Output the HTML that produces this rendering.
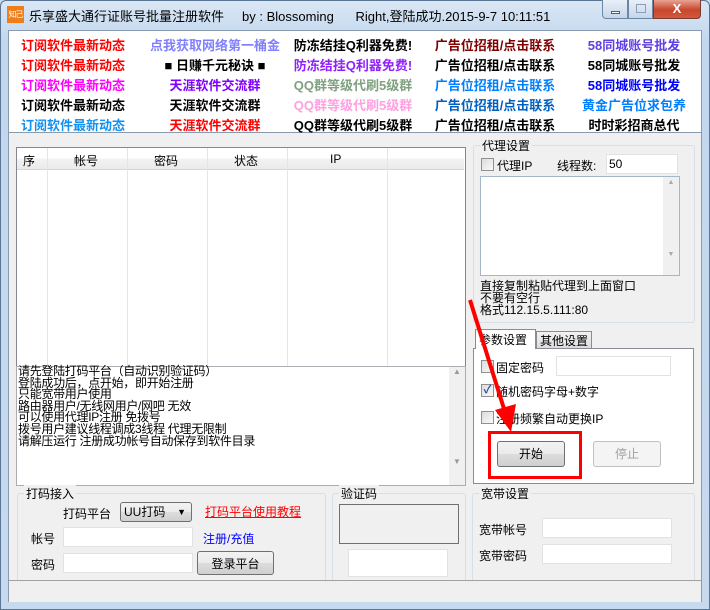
<!DOCTYPE html>
<html><head><meta charset="utf-8"><style>
*{box-sizing:border-box;margin:0;padding:0}
body{width:710px;height:610px;overflow:hidden;background:#c9dcf0;font-family:"Liberation Sans","Noto Sans CJK SC","WenQuanYi Zen Hei",sans-serif;font-size:12px;position:relative}
.a{position:absolute}
.frame{left:0;top:0;width:710px;height:610px;background:linear-gradient(#dae7f5,#c2d7ee 40px,#c6d9ef);border:1px solid #5a7694;border-radius:6px 6px 0 0}
.top{left:8px;top:30px;width:694px;height:103px;background:#fff;border:1px solid #8a9bb0}
.link{position:absolute;font-weight:bold;font-size:13px;white-space:nowrap;transform:translateX(-50%)}
.client{left:8px;top:133px;width:694px;height:469px;background:#f0f0f0;border-left:1px solid #8a9bb0;border-right:1px solid #8a9bb0;border-bottom:1px solid #8a9bb0}
.box{background:#fff;border:1px solid #abadb3}
.grp{border:1px solid #d5dfe5;border-radius:3px}
.lg{position:absolute;background:#f0f0f0;padding:0 2px;font-size:12px;top:-9px;left:6px}
.btn{border:1px solid #707070;border-radius:3px;background:linear-gradient(#f2f2f2,#ebebeb 50%,#dddddd 50%,#cfcfcf);text-align:center;line-height:24px}
.cb{width:13px;height:13px;border:1px solid #8f8f8f;background:linear-gradient(135deg,#dcdcdc,#fafafa)}
.t{position:absolute;white-space:nowrap}
</style></head><body>
<div class="a frame"></div>
<div class="a" style="left:7px;top:6px;width:17px;height:17px;background:#f07d1a;color:#fff;font-size:8px;line-height:17px;text-align:center;letter-spacing:-1px;overflow:hidden">知己</div>
<div class="t" style="left:29px;top:6px;font-size:13px;color:#000">乐享盛大通行证账号批量注册软件&nbsp;&nbsp;&nbsp;&nbsp;&nbsp;by : Blossoming&nbsp;&nbsp;&nbsp;&nbsp;&nbsp;&nbsp;Right,登陆成功.2015-9-7 10:11:51</div>
<div class="a" style="left:602px;top:0;width:26px;height:19px;border:1px solid #6d86a3;border-top:0;border-radius:0 0 0 4px;background:linear-gradient(#e9f0f8,#c5d6ea)"><div class="a" style="left:8px;top:11px;width:9px;height:3px;background:#fff;border:1px solid #4a5f78"></div></div>
<div class="a" style="left:628px;top:0;width:25px;height:19px;border:1px solid #6d86a3;border-top:0;background:linear-gradient(#e9f0f8,#c5d6ea)"><div class="a" style="left:7px;top:4px;width:10px;height:9px;border:1px solid #8aa0b8"></div></div>
<div class="a" style="left:653px;top:0;width:48px;height:19px;border:1px solid #7a3a30;border-top:0;border-radius:0 0 4px 0;background:linear-gradient(#e8a393,#c9462c 55%,#d05a3a);color:#fff;font-weight:bold;font-size:13px;text-align:center;line-height:18px">X</div>
<div class="a top">
<div class="link" style="left:64px;top:4px;color:#f00">订阅软件最新动态</div>
<div class="link" style="left:206px;top:4px;color:#8080ff">点我获取网络第一桶金</div>
<div class="link" style="left:344px;top:4px;color:#000">防冻结挂Q利器免费!</div>
<div class="link" style="left:486px;top:4px;color:#800000">广告位招租/点击联系</div>
<div class="link" style="left:625px;top:4px;color:#6040e0">58同城账号批发</div>
<div class="link" style="left:64px;top:24px;color:#f00">订阅软件最新动态</div>
<div class="link" style="left:206px;top:24px;color:#000">■ 日赚千元秘诀 ■</div>
<div class="link" style="left:344px;top:24px;color:#9020ff">防冻结挂Q利器免费!</div>
<div class="link" style="left:486px;top:24px;color:#000">广告位招租/点击联系</div>
<div class="link" style="left:625px;top:24px;color:#000">58同城账号批发</div>
<div class="link" style="left:64px;top:44px;color:#f0f">订阅软件最新动态</div>
<div class="link" style="left:206px;top:44px;color:#8000ff">天涯软件交流群</div>
<div class="link" style="left:344px;top:44px;color:#80a080">QQ群等级代刷5级群</div>
<div class="link" style="left:486px;top:44px;color:#0080ff">广告位招租/点击联系</div>
<div class="link" style="left:625px;top:44px;color:#0000ff">58同城账号批发</div>
<div class="link" style="left:64px;top:64px;color:#000">订阅软件最新动态</div>
<div class="link" style="left:206px;top:64px;color:#000">天涯软件交流群</div>
<div class="link" style="left:344px;top:64px;color:#ffa0e0">QQ群等级代刷5级群</div>
<div class="link" style="left:486px;top:64px;color:#0060c0">广告位招租/点击联系</div>
<div class="link" style="left:625px;top:64px;color:#0080ff">黄金广告位求包养</div>
<div class="link" style="left:64px;top:84px;color:#1090f0">订阅软件最新动态</div>
<div class="link" style="left:206px;top:84px;color:#f00">天涯软件交流群</div>
<div class="link" style="left:344px;top:84px;color:#000">QQ群等级代刷5级群</div>
<div class="link" style="left:486px;top:84px;color:#000">广告位招租/点击联系</div>
<div class="link" style="left:625px;top:84px;color:#000">时时彩招商总代</div>
</div>
<div class="a client"></div>
<div class="a box" style="left:16px;top:147px;width:450px;height:220px;border-color:#828790"></div>
<div class="a" style="left:17px;top:148px;width:447px;height:22px;background:linear-gradient(#fff,#fff 50%,#f3f3f3 50%,#eaeaea);border-bottom:1px solid #d5d5d5"></div>
<div class="t" style="left:23px;top:152px">序</div>
<div class="t" style="left:74px;top:152px">帐号</div>
<div class="t" style="left:154px;top:152px">密码</div>
<div class="t" style="left:234px;top:152px">状态</div>
<div class="t" style="left:330px;top:152px">IP</div>
<div class="a" style="left:47px;top:148px;height:218px;border-left:1px solid #e5e5e5"></div>
<div class="a" style="left:127px;top:148px;height:218px;border-left:1px solid #e5e5e5"></div>
<div class="a" style="left:207px;top:148px;height:218px;border-left:1px solid #e5e5e5"></div>
<div class="a" style="left:287px;top:148px;height:218px;border-left:1px solid #e5e5e5"></div>
<div class="a" style="left:387px;top:148px;height:218px;border-left:1px solid #e5e5e5"></div>
<div class="a box" style="left:16px;top:366px;width:450px;height:120px"></div>
<div class="a" style="left:449px;top:367px;width:16px;height:118px;background:#f0f0f0;color:#999;font-size:8px;text-align:center">▲<br><br><br><br><br><br><br><br><br><br>▼</div>
<div class="t" style="left:18px;top:366px;line-height:11.6px;font-size:12px;letter-spacing:-0.3px">请先登陆打码平台（自动识别验证码）<br>登陆成功后，点开始，即开始注册<br>只能宽带用户使用<br>路由器用户/无线网用户/网吧 无效<br>可以使用代理IP注册 免拨号<br>拨号用户建议线程调成3线程 代理无限制<br>请解压运行 注册成功帐号自动保存到软件目录</div>
<div class="a grp" style="left:17px;top:493px;width:309px;height:100px"><span class="lg">打码接入</span></div>
<div class="t" style="left:63px;top:505px">打码平台</div>
<div class="a btn" style="left:120px;top:502px;width:72px;height:20px;line-height:18px;text-align:left;padding-left:3px">UU打码 <span style="position:absolute;right:5px;font-size:9px">▼</span></div>
<div class="t" style="left:205px;top:503px;color:#f00;text-decoration:underline">打码平台使用教程</div>
<div class="t" style="left:31px;top:530px">帐号</div>
<div class="a box" style="left:63px;top:527px;width:130px;height:20px;border-color:#e0e3e6"></div>
<div class="t" style="left:203px;top:530px;color:#00f">注册/充值</div>
<div class="t" style="left:31px;top:556px">密码</div>
<div class="a box" style="left:63px;top:553px;width:130px;height:20px;border-color:#e0e3e6"></div>
<div class="a btn" style="left:197px;top:551px;width:77px;height:24px">登录平台</div>
<div class="a grp" style="left:332px;top:493px;width:134px;height:100px"><span class="lg">验证码</span></div>
<div class="a" style="left:339px;top:504px;width:120px;height:40px;border:1px solid #707070"></div>
<div class="a box" style="left:348px;top:549px;width:100px;height:28px;border-color:#e0e3e6"></div>
<div class="a grp" style="left:473px;top:145px;width:222px;height:178px"><span class="lg">代理设置</span></div>
<div class="a cb" style="left:481px;top:158px"></div>
<div class="t" style="left:497px;top:157px">代理IP</div>
<div class="t" style="left:557px;top:157px">线程数:</div>
<div class="a box" style="left:606px;top:154px;width:72px;height:20px;border-color:#e0e3e6;padding:2px">50</div>
<div class="a box" style="left:480px;top:176px;width:200px;height:100px;border-color:#a5b6c8"></div>
<div class="a" style="left:663px;top:177px;width:16px;height:98px;background:#f0f0f0;color:#aaa;font-size:7px;text-align:center;line-height:12px">▲<br><br><br><br><br><br>▼</div>
<div class="t" style="left:480px;top:280px;line-height:12px">直接复制粘贴代理到上面窗口<br>不要有空行<br>格式112.15.5.111:80</div>
<div class="a" style="left:473px;top:348px;width:221px;height:136px;background:#fff;border:1px solid #898c95"></div>
<div class="a" style="left:475px;top:329px;width:61px;height:20px;background:#fff;border:1px solid #898c95;border-bottom:0;padding:1px 3px">参数设置</div>
<div class="a" style="left:536px;top:331px;width:56px;height:17px;background:linear-gradient(#f2f2f2,#dcdcdc);border:1px solid #898c95;border-bottom:0;padding:0 3px">其他设置</div>
<div class="a cb" style="left:481px;top:360px"></div>
<div class="t" style="left:496px;top:359px">固定密码</div>
<div class="a box" style="left:556px;top:356px;width:115px;height:20px;border-color:#e0e3e6"></div>
<div class="a cb" style="left:481px;top:384px;color:#2a4aa0;font-size:11px;line-height:11px;text-align:center;font-weight:bold">✓</div>
<div class="t" style="left:496px;top:383px">随机密码字母+数字</div>
<div class="a cb" style="left:481px;top:411px"></div>
<div class="t" style="left:496px;top:410px">注册频繁自动更换IP</div>
<div class="a" style="left:488px;top:431px;width:94px;height:48px;border:3px solid #f00"></div>
<div class="a btn" style="left:497px;top:441px;width:68px;height:26px">开始</div>
<div class="a btn" style="left:593px;top:441px;width:68px;height:26px;color:#a0a0a0;border-color:#c0c0c0;background:#f4f4f4">停止</div>
<div class="a grp" style="left:472px;top:493px;width:223px;height:100px"><span class="lg">宽带设置</span></div>
<div class="t" style="left:479px;top:521px">宽带帐号</div>
<div class="a box" style="left:542px;top:518px;width:130px;height:20px;border-color:#e0e3e6"></div>
<div class="t" style="left:479px;top:547px">宽带密码</div>
<div class="a box" style="left:542px;top:544px;width:130px;height:20px;border-color:#e0e3e6"></div>
<div class="a" style="left:9px;top:580px;width:692px;height:22px;background:#f0f0f0;border-top:1px solid #a0a0a0"></div>
<svg class="a" style="left:0;top:0" width="710" height="610"><line x1="470" y1="300" x2="505" y2="412" stroke="#f00" stroke-width="4"/><polygon points="495,410 516,404 511,432" fill="#f00"/></svg>
</body></html>
